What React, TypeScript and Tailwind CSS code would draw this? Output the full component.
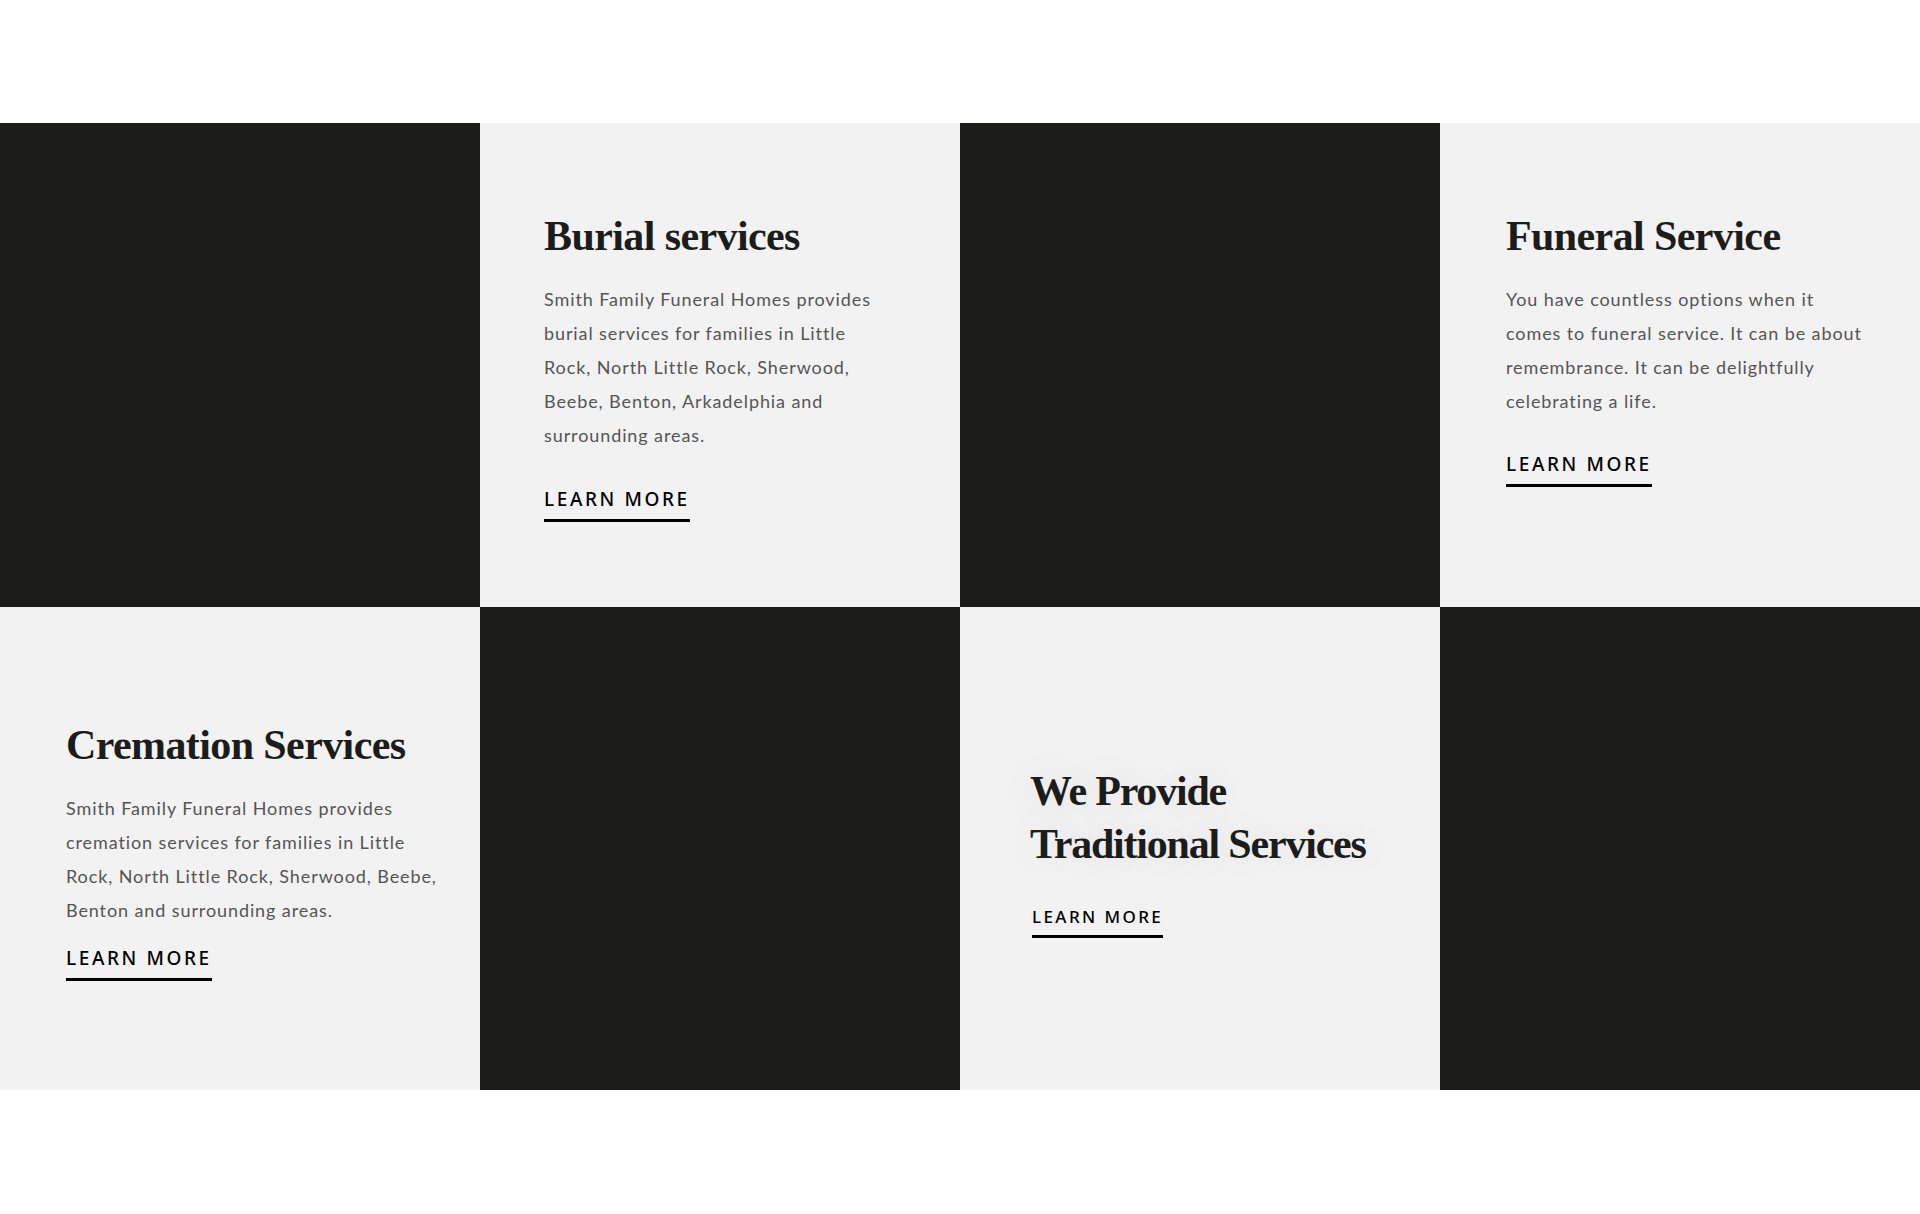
const cards = [
  { dark: true },
  {
    title: "Burial services",
    body: "Smith Family Funeral Homes provides burial services for families in Little Rock, North Little Rock, Sherwood, Beebe, Benton, Arkadelphia and surrounding areas.",
    pad: "pt-[89px] pl-[64px] pr-[70px]",
    gap: "mt-[36px]",
  },
  { dark: true },
  {
    title: "Funeral Service",
    body: "You have countless options when it comes to funeral service. It can be about remembrance. It can be delightfully celebrating a life.",
    pad: "pt-[89px] pl-[66px] pr-[48px]",
    gap: "mt-[35px]",
  },
  {
    title: "Cremation Services",
    body: "Smith Family Funeral Homes provides cremation services for families in Little Rock, North Little Rock, Sherwood, Beebe, Benton and surrounding areas.",
    pad: "pt-[114px] pl-[66px] pr-[32px]",
    gap: "mt-[20px]",
  },
  { dark: true },
  { feature: true },
  { dark: true },
];

const LearnMore = ({ small }: { small?: boolean }) => (
  <a
    href="#"
    className={
      small
        ? "inline-block font-['Noto_Sans',sans-serif] font-medium text-[17px] tracking-[2.4px] text-black border-b-[3px] border-black pb-[10px] leading-none"
        : "inline-block font-['Noto_Sans',sans-serif] font-medium text-[19px] tracking-[2.6px] text-black border-b-[3px] border-black pb-[10px] leading-none"
    }
  >
    LEARN MORE
  </a>
);

const App = () => {
  return (
    <div className="bg-white w-full min-h-[1214px] pt-[123px]">
      <div className="grid grid-cols-4 grid-rows-[484px_483px]">
        {cards.map((c, i) => {
          if (c.dark) return <div key={i} className="bg-[#1c1c1b]" />;
          if (c.feature)
            return (
              <div key={i} className="bg-[#f2f2f2] flex flex-col pt-[158px] px-[70px]">
                <h2 className="font-['Liberation_Serif',serif] font-bold text-[42px] leading-[53px] tracking-[-1.2px] text-[#1c1c1b] [text-shadow:0_0_40px_rgba(0,0,0,0.12)]">
                  We Provide
                  <br />
                  Traditional Services
                </h2>
                <div className="mt-[34px] pl-[2px]">
                  <LearnMore small />
                </div>
              </div>
            );
          return (
            <div key={i} className={`bg-[#f2f2f2] flex flex-col ${c.pad}`}>
              <h2 className="font-['Liberation_Serif',serif] font-bold text-[42px] leading-[48px] tracking-[-0.6px] text-[#1c1c1b]">
                {c.title}
              </h2>
              <p className="mt-[22px] font-['Lato',sans-serif] text-[18px] leading-[34px] text-[#555555] tracking-[0.9px]">
                {c.body}
              </p>
              <div className={c.gap}>
                <LearnMore />
              </div>
            </div>
          );
        })}
      </div>
    </div>
  );
};

export default App;
